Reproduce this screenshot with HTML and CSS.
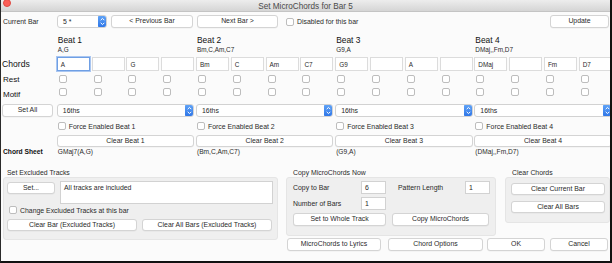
FILE: index.html
```html
<!DOCTYPE html>
<html>
<head>
<meta charset="utf-8">
<link rel="stylesheet" href="styles.css">
</head>
<body>
<div class="window">
  <div class="titlebar"><span class="close"></span><span class="title">Set MicroChords for Bar 5</span></div>

  <div class="toprow">
    <span class="cur">Current Bar</span>
    <div class="select selbar"><span class="val">5 *</span><span class="stepper"><svg width="9" height="13" viewBox="0 0 9 13"><path d="M2.7 5.2 L4.5 3.4 L6.3 5.2 M2.7 7.8 L4.5 9.6 L6.3 7.8" fill="none" stroke="#fff" stroke-width="1"/></svg></span></div>
    <button class="btn prev">&lt; Previous Bar</button>
    <button class="btn next">Next Bar &gt;</button>
    <div class="chk dis"><span class="box"></span><span>Disabled for this bar</span></div>
    <button class="btn update">Update</button>
  </div>

  <div class="grid beats">
    <div></div>
    <div class="beat span4"><div class="bt">Beat 1</div><div class="bc">A,G</div></div>
    <div class="beat span4"><div class="bt">Beat 2</div><div class="bc">Bm,C,Am,C7</div></div>
    <div class="beat span4"><div class="bt">Beat 3</div><div class="bc">G9,A</div></div>
    <div class="beat span4"><div class="bt">Beat 4</div><div class="bc">DMaj,,Fm,D7</div></div>
  </div>

  <div class="grid chords">
    <div class="rowlbl big">Chords</div>
    <div class="cell focus">A</div><div class="cell"></div><div class="cell">G</div><div class="cell"></div>
    <div class="cell">Bm</div><div class="cell">C</div><div class="cell">Am</div><div class="cell">C7</div>
    <div class="cell">G9</div><div class="cell"></div><div class="cell">A</div><div class="cell"></div>
    <div class="cell">DMaj</div><div class="cell"></div><div class="cell">Fm</div><div class="cell">D7</div>
  </div>

  <div class="grid checks rest">
    <div class="rowlbl mid">Rest</div>
    <div class="cc"><span class="box"></span></div><div class="cc"><span class="box"></span></div><div class="cc"><span class="box"></span></div><div class="cc"><span class="box"></span></div>
    <div class="cc"><span class="box"></span></div><div class="cc"><span class="box"></span></div><div class="cc"><span class="box"></span></div><div class="cc"><span class="box"></span></div>
    <div class="cc"><span class="box"></span></div><div class="cc"><span class="box"></span></div><div class="cc"><span class="box"></span></div><div class="cc"><span class="box"></span></div>
    <div class="cc"><span class="box"></span></div><div class="cc"><span class="box"></span></div><div class="cc"><span class="box"></span></div><div class="cc"><span class="box"></span></div>
  </div>

  <div class="grid checks motif">
    <div class="rowlbl mid motiflbl">Motif</div>
    <div class="cc"><span class="box"></span></div><div class="cc"><span class="box"></span></div><div class="cc"><span class="box"></span></div><div class="cc"><span class="box"></span></div>
    <div class="cc"><span class="box"></span></div><div class="cc"><span class="box"></span></div><div class="cc"><span class="box"></span></div><div class="cc"><span class="box"></span></div>
    <div class="cc"><span class="box"></span></div><div class="cc"><span class="box"></span></div><div class="cc"><span class="box"></span></div><div class="cc"><span class="box"></span></div>
    <div class="cc"><span class="box"></span></div><div class="cc"><span class="box"></span></div><div class="cc"><span class="box"></span></div><div class="cc"><span class="box"></span></div>
  </div>

  <div class="grid setall">
    <div><button class="btn setallbtn">Set All</button></div>
    <div class="select span4"><span class="val">16ths</span><span class="stepper"><svg width="9" height="13" viewBox="0 0 9 13"><path d="M2.7 5.2 L4.5 3.4 L6.3 5.2 M2.7 7.8 L4.5 9.6 L6.3 7.8" fill="none" stroke="#fff" stroke-width="1"/></svg></span></div>
    <div class="select span4"><span class="val">16ths</span><span class="stepper"><svg width="9" height="13" viewBox="0 0 9 13"><path d="M2.7 5.2 L4.5 3.4 L6.3 5.2 M2.7 7.8 L4.5 9.6 L6.3 7.8" fill="none" stroke="#fff" stroke-width="1"/></svg></span></div>
    <div class="select span4"><span class="val">16ths</span><span class="stepper"><svg width="9" height="13" viewBox="0 0 9 13"><path d="M2.7 5.2 L4.5 3.4 L6.3 5.2 M2.7 7.8 L4.5 9.6 L6.3 7.8" fill="none" stroke="#fff" stroke-width="1"/></svg></span></div>
    <div class="select span4"><span class="val">16ths</span><span class="stepper"><svg width="9" height="13" viewBox="0 0 9 13"><path d="M2.7 5.2 L4.5 3.4 L6.3 5.2 M2.7 7.8 L4.5 9.6 L6.3 7.8" fill="none" stroke="#fff" stroke-width="1"/></svg></span></div>
  </div>

  <div class="grid force">
    <div></div>
    <div class="chk span4"><span class="box"></span><span>Force Enabled Beat 1</span></div>
    <div class="chk span4"><span class="box"></span><span>Force Enabled Beat 2</span></div>
    <div class="chk span4"><span class="box"></span><span>Force Enabled Beat 3</span></div>
    <div class="chk span4"><span class="box"></span><span>Force Enabled Beat 4</span></div>
  </div>

  <div class="grid clearbeat">
    <div></div>
    <button class="btn span4">Clear Beat 1</button>
    <button class="btn span4">Clear Beat 2</button>
    <button class="btn span4">Clear Beat 3</button>
    <button class="btn span4">Clear Beat 4</button>
  </div>

  <div class="grid sheet">
    <div class="rowlbl bold">Chord Sheet</div>
    <div class="span4 sh">GMaj7(A,G)</div>
    <div class="span4 sh">(Bm,C,Am,C7)</div>
    <div class="span4 sh">(G9,A)</div>
    <div class="span4 sh">(DMaj,,Fm,D7)</div>
  </div>

  <div class="bottom">
    <div class="leftcol">
      <div class="glabel">Set Excluded Tracks</div>
      <div class="group exgrp">
        <div class="ex-top">
          <button class="btn setbtn">Set...</button>
          <div class="textarea">All tracks are included</div>
        </div>
        <div class="chk exchk"><span class="box"></span><span>Change Excluded Tracks at this bar</span></div>
        <div class="ex-btns">
          <button class="btn">Clear Bar (Excluded Tracks)</button>
          <button class="btn">Clear All Bars (Excluded Tracks)</button>
        </div>
      </div>
    </div>
    <div class="rightcol">
      <div class="rtop">
        <div class="copycol">
          <div class="glabel">Copy MicroChords Now</div>
          <div class="group copygrp">
            <div class="copygrid">
              <span class="clbl">Copy to Bar</span>
              <div class="num">6</div>
              <span></span>
              <span class="clbl">Pattern Length</span>
              <div class="num">1</div>
              <span class="clbl">Number of Bars</span>
              <div class="num">1</div>
            </div>
            <div class="copybtns">
              <button class="btn whole">Set to Whole Track</button>
              <button class="btn copymc">Copy MicroChords</button>
            </div>
          </div>
        </div>
        <div class="clearcol">
          <div class="glabel">Clear Chords</div>
          <div class="group cleargrp">
            <button class="btn">Clear Current Bar</button>
            <button class="btn">Clear All Bars</button>
          </div>
        </div>
      </div>
      <div class="actions">
        <button class="btn a1">MicroChords to Lyrics</button>
        <button class="btn a2">Chord Options</button>
        <button class="btn a3">OK</button>
        <button class="btn a4">Cancel</button>
      </div>
    </div>
  </div>
</div>
</body>
</html>
```

FILE: styles.css
```css
* { box-sizing: border-box; }
html, body { margin: 0; padding: 0; }
body {
  width: 612px; height: 263px; overflow: hidden;
  background: #111;
  font-family: "Liberation Sans", Arial, sans-serif;
  font-size: 6.9px; color: #2a2a2a;
}
.window {
  width: 612px; height: 263px; overflow: hidden;
  background: #fbfbfb;
  border-left: 1px solid #2a2a2a;
  border-right: 2px solid #111;
  border-bottom: 2px solid #111;
}
.titlebar {
  height: 12px; position: relative;
  background: linear-gradient(#ededed, #d5d5d5);
  border-bottom: 1px solid #c4c4c4;
  display: flex; justify-content: center; align-items: flex-start;
  padding-top: 1px;
}
.close {
  position: absolute; left: 2px; top: -1px;
  width: 8px; height: 8px; border-radius: 50%;
  background: #fc5e57; border: 0.5px solid #de4a43;
}
.title { font-size: 8.2px; line-height: 11px; color: #4a4a4a; }

.btn {
  font: inherit; color: #2a2a2a; margin: 0; padding: 0;
  height: 13px; background: #fff;
  border: 1px solid #d4d4d4; border-radius: 3px;
  box-shadow: 0 0.5px 0.5px rgba(0,0,0,0.06);
  display: flex; align-items: center; justify-content: center;
  line-height: 1; white-space: nowrap;
}
.box {
  display: inline-block; flex: 0 0 auto;
  width: 8px; height: 8px; background: #fff;
  border: 1px solid #bdbdbd; border-radius: 2px;
}
.chk { display: flex; align-items: center; gap: 3px; white-space: nowrap; }

.select {
  display: flex; align-items: center; height: 13px;
  background: #fff; border: 1px solid #d2d2d2; border-radius: 3px;
  overflow: hidden; padding-left: 5px;
}
.select .val { flex: 1; }
.stepper {
  flex: 0 0 9px; height: 13px; margin: -1px -1px -1px 0;
  background: linear-gradient(#63a6f8, #2b73e6);
  border-radius: 2.5px; display: flex;
}

.toprow { display: flex; align-items: center; height: 13px; margin-top: 3px; }
.cur { flex: 0 0 56px; padding-left: 2px; }
.selbar { flex: 0 0 50px; }
.prev { width: 82px; margin-left: 4px; }
.next { width: 81px; margin-left: 4px; }
.dis { margin-left: 8px; }
.update { width: 59px; margin-left: auto; margin-right: 1px; }

.grid { display: grid; grid-template-columns: 54px repeat(16, 33px); column-gap: 1.8px; }
.span4 { grid-column: span 4; }

.beats { margin-top: 7px; }
.beat { padding-left: 1px; }
.bt { font-size: 8.4px; line-height: 11px; color: #111; }
.bc { font-size: 6.4px; line-height: 8px; }

.chords { margin-top: 3px; height: 14px; }
.rowlbl { padding-left: 1px; display: flex; align-items: center; color: #111; white-space: nowrap; }
.big { font-size: 8.6px; }
.mid { font-size: 8px; padding-left: 2px; }
.bold { font-weight: bold; font-size: 6.7px; padding-left: 2px; }
.cell {
  height: 14px; background: #fff; border: 1px solid #dcdcdc;
  font-size: 6.4px; padding-left: 3px; display: flex; align-items: center;
}
.cell.focus { border: 1px solid #6f9fe4; box-shadow: 0 0 0 1px #a9c6f1; }

.checks { height: 12px; }
.rest { margin-top: 2px; }
.cc { display: flex; align-items: center; padding-left: 2px; }
.motiflbl { padding-top: 5px; }

.setall { margin-top: 7px; height: 13px; }
.setallbtn { width: 51px; margin-left: 1px; }

.force { margin-top: 3px; height: 12px; }
.force .chk { padding-left: 1px; }

.clearbeat { margin-top: 3px; }
.clearbeat .btn { height: 12px; }

.sheet { height: 8px; }
.sh { font-size: 6.6px; display: flex; align-items: center; padding-left: 1px; }

.bottom { display: flex; margin-top: 13px; }
.glabel { height: 9px; line-height: 9px; padding-left: 4px; white-space: nowrap; }
.group { background: #efefef; border: 1px solid #e5e5e5; border-radius: 3px; }

.leftcol { width: 275px; margin-left: 2px; }
.exgrp { height: 63px; padding: 3px 4px 0 3px; }
.ex-top { display: flex; gap: 5px; }
.setbtn { width: 48px; height: 12px; margin-top: 1px; }
.textarea {
  flex: 1; height: 23px; background: #fff; border: 1px solid #d2d2d2;
  padding: 2px 3px; line-height: 7px;
}
.exchk { margin-top: 2px; height: 8px; padding-left: 2px; }
.ex-btns { display: flex; gap: 5px; margin-top: 5px; }
.ex-btns .btn { width: 130px; height: 12px; }

.rightcol { width: 324px; margin-left: 8px; }
.rtop { display: flex; }
.copycol { width: 210px; }
.copycol .glabel { padding-left: 7px; }
.copygrp { height: 59px; padding: 3px 6px 0 6px; }
.copygrid {
  display: grid; grid-template-columns: 68px 25px 12px 67px 25px;
  grid-template-rows: 13px 13px; row-gap: 3px; align-items: center;
}
.num {
  height: 13px; background: #fff; border: 1px solid #d2d2d2;
  padding-left: 3px; display: flex; align-items: center;
}
.clbl { white-space: nowrap; }
.copybtns { display: flex; gap: 6px; margin-top: 3px; }
.whole { width: 93px; }
.copymc { width: 97px; }

.clearcol { width: 105px; margin-left: 9px; }
.clearcol .glabel { padding-left: 7px; }
.cleargrp { height: 46px; padding: 5px 4px 0 5px; display: flex; flex-direction: column; gap: 6px; }
.cleargrp .btn { width: 94px; height: 12px; }

.actions { display: flex; margin-top: 2px; }
.a1 { width: 94px; margin-left: 1px; }
.a2 { width: 95px; margin-left: 7px; }
.a3 { width: 58px; margin-left: 4px; }
.a4 { width: 58px; margin-left: 5px; }
```
